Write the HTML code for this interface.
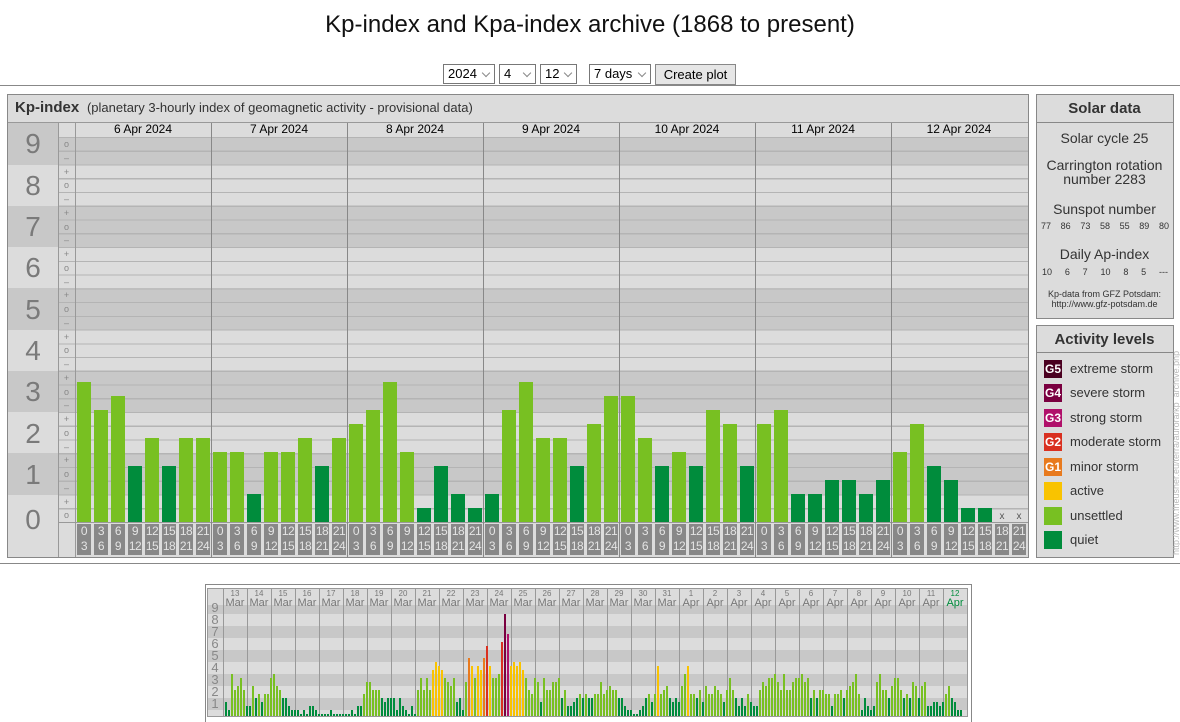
<!DOCTYPE html>
<html><head><meta charset="utf-8">
<style>
*{box-sizing:border-box;margin:0;padding:0}
html{width:1180px;height:722px;overflow:hidden}
body{width:1180px;height:722px;overflow:hidden;background:#fff;font-family:"Liberation Sans",Arial,sans-serif;position:relative}
.a{position:absolute}
h1{position:absolute;left:0;width:1180px;top:11px;text-align:center;font-weight:normal;font-size:24px;color:#111}
.sel{position:absolute;top:64px;height:20px;border:1px solid #777;background:#fff;font-size:13px;line-height:18px;padding-left:4px;color:#000}
.sel:after{content:"";position:absolute;right:5px;top:5px;width:5px;height:5px;border-right:1px solid #888;border-bottom:1px solid #888;transform:rotate(45deg)}
.btn{position:absolute;top:64px;left:655px;width:81px;height:21px;border:1px solid #888;background:#e6e6e6;font-size:13px;line-height:19px;text-align:center}
.hr{position:absolute;left:0;width:1180px;height:1px;background:#888}
.panel{position:absolute;background:#dcdcdc;border:1px solid #888}
.dark{position:absolute;background:#c8c8c8}
.num{position:absolute;left:8px;width:50px;text-align:center;font-size:28px;color:#7a7a7a;line-height:28px}
.sg{position:absolute;left:58px;width:17px;text-align:center;font-size:9px;color:#888;line-height:14px}
.vl{position:absolute;width:1px;background:#888}
.day{position:absolute;top:137px;height:385px;display:flex;align-items:flex-end;gap:3px}
.day i{display:block;width:14px}
.q{background:#008c3c}.u{background:#78c022}.ac{background:#f9c300}.g1{background:#e87a1e}.g2{background:#d93020}.g3{background:#b0106a}.g4{background:#7a0040}.g5{background:#4a0020}
.lab{position:absolute;top:524px;display:flex;gap:3px}
.lab b{display:block;width:14px;height:31px;background:#888;color:#e4e4e4;font-weight:normal;font-size:12px;line-height:15px;text-align:center;letter-spacing:-0.5px}
.dt{position:absolute;top:122px;width:136px;text-align:center;font-size:12px;line-height:15px;color:#000}
.st{position:absolute;left:1036px;width:137px;text-align:center;color:#333}
.lv{position:absolute;left:1044px;width:18px;height:18px;color:#fff;font-size:12px;font-weight:bold;line-height:18px;text-align:center}
.lt{position:absolute;left:1070px;font-size:13px;color:#333}
.md{position:absolute;top:608px;height:108px;display:flex;align-items:flex-end;gap:1px;padding-left:1px}
.md i{display:block;width:2px}
.mh{position:absolute;top:589px;width:24px;text-align:center;color:#777;line-height:9px}
.mh s{text-decoration:none;display:block;font-size:8px}
.mh span{display:block;font-size:11px;line-height:11px}
.mn{position:absolute;left:207px;width:16px;text-align:center;font-size:13px;color:#888;line-height:12px}
</style></head><body>
<h1>Kp-index and Kpa-index archive (1868 to present)</h1>
<div class="sel" style="left:443px;width:52px">2024</div>
<div class="sel" style="left:499px;width:37px">4</div>
<div class="sel" style="left:540px;width:37px">12</div>
<div class="sel" style="left:589px;width:62px">7 days</div>
<div class="btn">Create plot</div>
<div class="hr" style="top:85px"></div>
<div class="hr" style="top:563px"></div>

<div class="panel" style="left:7px;top:94px;width:1022px;height:464px"></div>
<div class="a" style="left:8px;top:122px;width:1020px;height:1px;background:#999"></div>
<div class="a" style="left:15px;top:99px;font-size:15px;font-weight:bold;color:#333">Kp-index <span style="font-weight:normal;font-size:13px;color:#333">&nbsp;(planetary 3-hourly index of geomagnetic activity - provisional data)</span></div>
<div class="dark" style="left:8px;top:123px;width:50px;height:42px"></div>
<div class="dark" style="left:58px;top:137px;width:970px;height:28px"></div>
<div class="dark" style="left:8px;top:206px;width:1020px;height:41px"></div>
<div class="dark" style="left:8px;top:288px;width:1020px;height:42px"></div>
<div class="dark" style="left:8px;top:371px;width:1020px;height:41px"></div>
<div class="dark" style="left:8px;top:453px;width:1020px;height:42px"></div>
<div class="a" style="left:58px;top:137px;width:970px;height:385px;background:repeating-linear-gradient(to bottom,#b4b4b4 0,#b4b4b4 1px,transparent 1px,transparent 13.75px)"></div>
<div class="a" style="left:58px;top:522px;width:970px;height:1px;background:#999"></div>
<div class="vl" style="left:58px;top:123px;height:434px;background:#999"></div>
<div class="vl" style="left:75px;top:123px;height:434px;background:#999"></div>
<div class="vl" style="left:211px;top:123px;height:434px"></div>
<div class="vl" style="left:347px;top:123px;height:434px"></div>
<div class="vl" style="left:483px;top:123px;height:434px"></div>
<div class="vl" style="left:619px;top:123px;height:434px"></div>
<div class="vl" style="left:755px;top:123px;height:434px"></div>
<div class="vl" style="left:891px;top:123px;height:434px"></div>
<div class="num" style="top:130px">9</div>
<div class="num" style="top:172px">8</div>
<div class="num" style="top:213px">7</div>
<div class="num" style="top:254px">6</div>
<div class="num" style="top:296px">5</div>
<div class="num" style="top:337px">4</div>
<div class="num" style="top:378px">3</div>
<div class="num" style="top:420px">2</div>
<div class="num" style="top:461px">1</div>
<div class="num" style="top:506px">0</div>
<div class="sg" style="top:137px">o</div><div class="sg" style="top:151px">–</div>
<div class="sg" style="top:165px">+</div><div class="sg" style="top:178px">o</div><div class="sg" style="top:192px">–</div>
<div class="sg" style="top:206px">+</div><div class="sg" style="top:220px">o</div><div class="sg" style="top:233px">–</div>
<div class="sg" style="top:247px">+</div><div class="sg" style="top:261px">o</div><div class="sg" style="top:275px">–</div>
<div class="sg" style="top:288px">+</div><div class="sg" style="top:302px">o</div><div class="sg" style="top:316px">–</div>
<div class="sg" style="top:330px">+</div><div class="sg" style="top:343px">o</div><div class="sg" style="top:357px">–</div>
<div class="sg" style="top:371px">+</div><div class="sg" style="top:385px">o</div><div class="sg" style="top:398px">–</div>
<div class="sg" style="top:412px">+</div><div class="sg" style="top:426px">o</div><div class="sg" style="top:440px">–</div>
<div class="sg" style="top:453px">+</div><div class="sg" style="top:467px">o</div><div class="sg" style="top:481px">–</div>
<div class="sg" style="top:495px">+</div><div class="sg" style="top:508px">o</div>
<div class="dt" style="left:75px">6 Apr 2024</div>
<div class="dt" style="left:211px">7 Apr 2024</div>
<div class="dt" style="left:347px">8 Apr 2024</div>
<div class="dt" style="left:483px">9 Apr 2024</div>
<div class="dt" style="left:619px">10 Apr 2024</div>
<div class="dt" style="left:755px">11 Apr 2024</div>
<div class="dt" style="left:891px">12 Apr 2024</div>
<div class="day" style="left:77px"><i class="u" style="height:140px"></i><i class="u" style="height:112px"></i><i class="u" style="height:126px"></i><i class="q" style="height:56px"></i><i class="u" style="height:84px"></i><i class="q" style="height:56px"></i><i class="u" style="height:84px"></i><i class="u" style="height:84px"></i></div>
<div class="day" style="left:213px"><i class="u" style="height:70px"></i><i class="u" style="height:70px"></i><i class="q" style="height:28px"></i><i class="u" style="height:70px"></i><i class="u" style="height:70px"></i><i class="u" style="height:84px"></i><i class="q" style="height:56px"></i><i class="u" style="height:84px"></i></div>
<div class="day" style="left:349px"><i class="u" style="height:98px"></i><i class="u" style="height:112px"></i><i class="u" style="height:140px"></i><i class="u" style="height:70px"></i><i class="q" style="height:14px"></i><i class="q" style="height:56px"></i><i class="q" style="height:28px"></i><i class="q" style="height:14px"></i></div>
<div class="day" style="left:485px"><i class="q" style="height:28px"></i><i class="u" style="height:112px"></i><i class="u" style="height:140px"></i><i class="u" style="height:84px"></i><i class="u" style="height:84px"></i><i class="q" style="height:56px"></i><i class="u" style="height:98px"></i><i class="u" style="height:126px"></i></div>
<div class="day" style="left:621px"><i class="u" style="height:126px"></i><i class="u" style="height:84px"></i><i class="q" style="height:56px"></i><i class="u" style="height:70px"></i><i class="q" style="height:56px"></i><i class="u" style="height:112px"></i><i class="u" style="height:98px"></i><i class="q" style="height:56px"></i></div>
<div class="day" style="left:757px"><i class="u" style="height:98px"></i><i class="u" style="height:112px"></i><i class="q" style="height:28px"></i><i class="q" style="height:28px"></i><i class="q" style="height:42px"></i><i class="q" style="height:42px"></i><i class="q" style="height:28px"></i><i class="q" style="height:42px"></i></div>
<div class="day" style="left:893px"><i class="u" style="height:70px"></i><i class="u" style="height:98px"></i><i class="q" style="height:56px"></i><i class="q" style="height:42px"></i><i class="q" style="height:14px"></i><i class="q" style="height:14px"></i></div>
<div class="a" style="left:995px;top:512px;width:14px;text-align:center;font-size:10px;color:#555;line-height:10px">x</div>
<div class="a" style="left:1012px;top:512px;width:14px;text-align:center;font-size:10px;color:#555;line-height:10px">x</div>
<div class="lab" style="left:77px"><b>0<br>3</b><b>3<br>6</b><b>6<br>9</b><b>9<br>12</b><b>12<br>15</b><b>15<br>18</b><b>18<br>21</b><b>21<br>24</b></div>
<div class="lab" style="left:213px"><b>0<br>3</b><b>3<br>6</b><b>6<br>9</b><b>9<br>12</b><b>12<br>15</b><b>15<br>18</b><b>18<br>21</b><b>21<br>24</b></div>
<div class="lab" style="left:349px"><b>0<br>3</b><b>3<br>6</b><b>6<br>9</b><b>9<br>12</b><b>12<br>15</b><b>15<br>18</b><b>18<br>21</b><b>21<br>24</b></div>
<div class="lab" style="left:485px"><b>0<br>3</b><b>3<br>6</b><b>6<br>9</b><b>9<br>12</b><b>12<br>15</b><b>15<br>18</b><b>18<br>21</b><b>21<br>24</b></div>
<div class="lab" style="left:621px"><b>0<br>3</b><b>3<br>6</b><b>6<br>9</b><b>9<br>12</b><b>12<br>15</b><b>15<br>18</b><b>18<br>21</b><b>21<br>24</b></div>
<div class="lab" style="left:757px"><b>0<br>3</b><b>3<br>6</b><b>6<br>9</b><b>9<br>12</b><b>12<br>15</b><b>15<br>18</b><b>18<br>21</b><b>21<br>24</b></div>
<div class="lab" style="left:893px"><b>0<br>3</b><b>3<br>6</b><b>6<br>9</b><b>9<br>12</b><b>12<br>15</b><b>15<br>18</b><b>18<br>21</b><b>21<br>24</b></div>

<div class="panel" style="left:1036px;top:94px;width:138px;height:225px"></div>
<div class="a" style="left:1037px;top:122px;width:136px;height:1px;background:#888"></div>
<div class="st" style="top:100px;font-size:15px;font-weight:bold">Solar data</div>
<div class="st" style="top:130px;font-size:14px">Solar cycle 25</div>
<div class="st" style="top:158px;font-size:14px;line-height:14px">Carrington rotation<br>number 2283</div>
<div class="st" style="top:201px;font-size:14px">Sunspot number</div>
<div class="a" style="left:1041px;top:221px;width:128px;font-size:9px;color:#333;display:flex;justify-content:space-between"><span>77</span><span>86</span><span>73</span><span>58</span><span>55</span><span>89</span><span>80</span></div>
<div class="st" style="top:246px;font-size:14px">Daily Ap-index</div>
<div class="a" style="left:1042px;top:267px;width:126px;font-size:9px;color:#333;display:flex;justify-content:space-between"><span>10</span><span>6</span><span>7</span><span>10</span><span>8</span><span>5</span><span>---</span></div>
<div class="st" style="top:289px;font-size:9px;line-height:10px">Kp-data from GFZ Potsdam:<br>http://www.gfz-potsdam.de</div>

<div class="panel" style="left:1036px;top:325px;width:138px;height:233px"></div>
<div class="a" style="left:1037px;top:352px;width:136px;height:1px;background:#888"></div>
<div class="st" style="top:331px;font-size:15px;font-weight:bold">Activity levels</div>
<div class="lv g5" style="top:360px">G5</div><div class="lt" style="top:361px">extreme storm</div>
<div class="lv g4" style="top:384px">G4</div><div class="lt" style="top:385px">severe storm</div>
<div class="lv g3" style="top:409px">G3</div><div class="lt" style="top:410px">strong storm</div>
<div class="lv g2" style="top:433px">G2</div><div class="lt" style="top:434px">moderate storm</div>
<div class="lv g1" style="top:458px">G1</div><div class="lt" style="top:459px">minor storm</div>
<div class="lv ac" style="top:482px"></div><div class="lt" style="top:483px">active</div>
<div class="lv u" style="top:507px"></div><div class="lt" style="top:508px">unsettled</div>
<div class="lv q" style="top:531px"></div><div class="lt" style="top:532px">quiet</div>
<div class="a" style="left:1171px;top:555px;transform-origin:0 0;transform:rotate(-90deg);font-size:9px;color:#bbb;white-space:nowrap">http://www.fheusner.eu/terra/aurora/kp_archive.php</div>

<div class="a" style="left:205px;top:584px;width:767px;height:138px;border:1px solid #888;border-bottom:none"></div>
<div class="a" style="left:207px;top:588px;width:761px;height:129px;background:#dcdcdc;border:1px solid #999"></div>
<div class="dark" style="left:208px;top:605px;width:759px;height:9px"></div>
<div class="dark" style="left:208px;top:626px;width:759px;height:12px"></div>
<div class="dark" style="left:208px;top:650px;width:759px;height:12px"></div>
<div class="dark" style="left:208px;top:674px;width:759px;height:12px"></div>
<div class="dark" style="left:208px;top:698px;width:759px;height:12px"></div>
<div class="mn" style="top:602px">9</div><div class="mn" style="top:614px">8</div><div class="mn" style="top:626px">7</div><div class="mn" style="top:638px">6</div><div class="mn" style="top:650px">5</div><div class="mn" style="top:662px">4</div><div class="mn" style="top:674px">3</div><div class="mn" style="top:686px">2</div><div class="mn" style="top:698px">1</div>
<div class="a" style="left:223px;top:588px;width:745px;height:129px;background:repeating-linear-gradient(to right,#999 0,#999 1px,transparent 1px,transparent 24px)"></div>
<div class="mh" style="left:223px"><s>13</s><span>Mar</span></div><div class="mh" style="left:247px"><s>14</s><span>Mar</span></div><div class="mh" style="left:271px"><s>15</s><span>Mar</span></div><div class="mh" style="left:295px"><s>16</s><span>Mar</span></div><div class="mh" style="left:319px"><s>17</s><span>Mar</span></div><div class="mh" style="left:343px"><s>18</s><span>Mar</span></div><div class="mh" style="left:367px"><s>19</s><span>Mar</span></div><div class="mh" style="left:391px"><s>20</s><span>Mar</span></div><div class="mh" style="left:415px"><s>21</s><span>Mar</span></div><div class="mh" style="left:439px"><s>22</s><span>Mar</span></div><div class="mh" style="left:463px"><s>23</s><span>Mar</span></div><div class="mh" style="left:487px"><s>24</s><span>Mar</span></div><div class="mh" style="left:511px"><s>25</s><span>Mar</span></div><div class="mh" style="left:535px"><s>26</s><span>Mar</span></div><div class="mh" style="left:559px"><s>27</s><span>Mar</span></div><div class="mh" style="left:583px"><s>28</s><span>Mar</span></div><div class="mh" style="left:607px"><s>29</s><span>Mar</span></div><div class="mh" style="left:631px"><s>30</s><span>Mar</span></div><div class="mh" style="left:655px"><s>31</s><span>Mar</span></div><div class="mh" style="left:679px"><s>1</s><span>Apr</span></div><div class="mh" style="left:703px"><s>2</s><span>Apr</span></div><div class="mh" style="left:727px"><s>3</s><span>Apr</span></div><div class="mh" style="left:751px"><s>4</s><span>Apr</span></div><div class="mh" style="left:775px"><s>5</s><span>Apr</span></div><div class="mh" style="left:799px"><s>6</s><span>Apr</span></div><div class="mh" style="left:823px"><s>7</s><span>Apr</span></div><div class="mh" style="left:847px"><s>8</s><span>Apr</span></div><div class="mh" style="left:871px"><s>9</s><span>Apr</span></div><div class="mh" style="left:895px"><s>10</s><span>Apr</span></div><div class="mh" style="left:919px"><s>11</s><span>Apr</span></div><div class="mh" style="left:943px;color:#008c3c"><s>12</s><span>Apr</span></div>
<div id="mini"></div>
<script>
var D=[[3,1,10,6,7,9,6,2],[2,7,4,5,3,5,5,9],[10,7,6,4,4,2,1,1],[1,0,1,0,2,2,1,0],[0,0,0,1,0,0,0,0],[0,0,1,0,2,2,5,8],[8,6,6,6,4,3,4,4],[4,1,4,2,1,0,2,0],[6,9,6,9,6,11,13,12],[11,9,8,7,9,3,4,1],[8,14,12,9,12,11,14,17],[12,9,9,10,18,25,20,12],[13,12,13,11,9,6,5,9],[8,3,9,6,6,8,8,9],[4,6,2,2,3,4,5,4],[5,4,4,5,5,8,5,6],[7,6,6,4,4,2,1,1],[0,0,1,2,4,5,3,5],[12,5,6,7,4,3,4,3],[7,10,12,5,5,4,6,3],[7,5,5,7,6,5,3,6],[9,6,4,2,4,2,5,3],[2,2,6,8,7,9,9,10],[8,6,10,6,6,8,9,9],[10,8,9,4,6,4,6,6],[5,5,2,5,5,6,4,6],[7,8,10,5,1,4,2,1],[2,8,10,6,6,4,7,9],[9,6,4,5,4,8,7,4],[7,8,2,2,3,3,2,3],[5,7,4,3,1,1]];
function c(t){return t<=4?'q':t<=10?'u':t<=13?'ac':t<=16?'g1':t<=19?'g2':t<=22?'g3':'g4'}
var h='';D.forEach(function(d,i){h+='<div class="md" style="left:'+(224+24*i)+'px">';d.forEach(function(t){h+='<i class="'+c(t)+'" style="height:'+(t*4+2)+'px"></i>'});h+='</div>'});
document.getElementById('mini').innerHTML=h;
</script>
</body></html>
